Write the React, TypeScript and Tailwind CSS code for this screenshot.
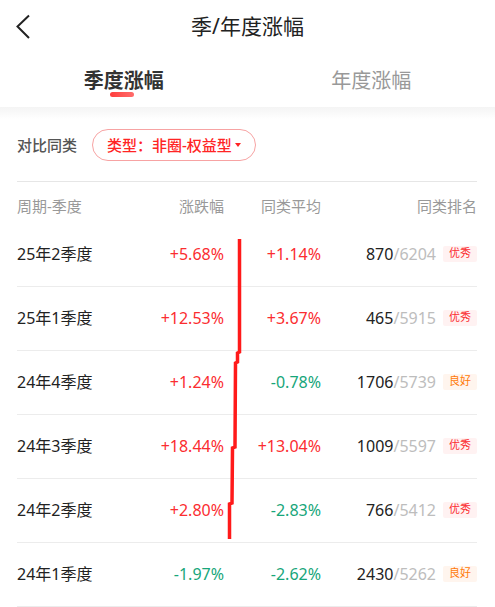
import React from "react";

type Row = {
  period: string;
  change: string;
  avg: string;
  rank: string;
  total: string;
  level: "优秀" | "良好";
};

const rows: Row[] = [
  { period: "25年2季度", change: "+5.68%", avg: "+1.14%", rank: "870", total: "6204", level: "优秀" },
  { period: "25年1季度", change: "+12.53%", avg: "+3.67%", rank: "465", total: "5915", level: "优秀" },
  { period: "24年4季度", change: "+1.24%", avg: "-0.78%", rank: "1706", total: "5739", level: "良好" },
  { period: "24年3季度", change: "+18.44%", avg: "+13.04%", rank: "1009", total: "5597", level: "优秀" },
  { period: "24年2季度", change: "+2.80%", avg: "-2.83%", rank: "766", total: "5412", level: "优秀" },
  { period: "24年1季度", change: "-1.97%", avg: "-2.62%", rank: "2430", total: "5262", level: "良好" },
];

function Pct({ value }: { value: string }) {
  const up = value.startsWith("+");
  return (
    <span className={up ? "text-[#fb2d30]" : "text-[#17a67a]"}>{value}</span>
  );
}

function Badge({ level }: { level: Row["level"] }) {
  if (level === "优秀") {
    return (
      <span className="ml-[7px] inline-flex h-[16px] w-[34px] items-center justify-center rounded-[2px] bg-[#fff2f2] text-[11px] text-[#fb2d30]">
        优秀
      </span>
    );
  }
  return (
    <span className="ml-[7px] inline-flex h-[16px] w-[34px] items-center justify-center rounded-[2px] bg-[#fff5ee] text-[11px] text-[#ff7a0a]">
      良好
    </span>
  );
}

export default function App() {
  return (
    <div
      className="relative h-[607px] w-[495px] overflow-hidden bg-white"
      style={{ fontFamily: '"Noto Sans", "Noto Sans CJK SC", sans-serif' }}
    >
      {/* header */}
      <div className="grid h-[54px] grid-cols-[60px_1fr_60px] items-center">
        <div className="pl-[15px]">
          <svg width="18" height="26" viewBox="0 0 18 26">
            <path d="M14 1.5 L2.5 12.5 L14 24" fill="none" stroke="#222" strokeWidth="2" />
          </svg>
        </div>
        <div className="text-center text-[21px] text-[#222]">季/年度涨幅</div>
        <div />
      </div>

      {/* tabs */}
      <div className="flex h-[53px]">
        <div className="relative flex flex-1 items-center justify-center">
          <span className="text-[20px] font-bold text-[#333]">季度涨幅</span>
          <span className="absolute left-[110px] top-[38px] h-[5px] w-[24px] rounded-full bg-gradient-to-r from-[#ff3b3b] to-[#ff6b6b]" />
        </div>
        <div className="flex flex-1 items-center justify-center">
          <span className="text-[20px] text-[#999]">年度涨幅</span>
        </div>
      </div>
      <div className="h-[12px] bg-gradient-to-b from-[#f4f4f4] to-white" />

      {/* filter */}
      <div className="pl-[17px] pr-[18px]">
        <div className="flex h-[52px] items-center">
          <span className="text-[15px] font-medium text-[#555]">对比同类</span>
          <div className="ml-[15px] flex h-[32px] items-center rounded-full border border-[#f7a3a3] px-[14px]">
            <span className="text-[15px] font-medium text-[#ff2424]">类型：非圈-权益型</span>
            <svg className="ml-[3px]" width="6" height="4" viewBox="0 0 6 4">
              <path d="M0 0 L6 0 L3 4 Z" fill="#ff2424" />
            </svg>
          </div>
        </div>

        <div className="mt-[10px] border-t border-[#e6e6e6]">
          <div className="grid h-[41px] grid-cols-[113px_94px_97px_1fr] items-center pt-[8px] text-[15px] text-[#999]">
            <span>周期-季度</span>
            <span className="text-right">涨跌幅</span>
            <span className="text-right">同类平均</span>
            <span className="text-right">同类排名</span>
          </div>
          {rows.map((r) => (
            <div
              key={r.period}
              className="grid h-[64px] grid-cols-[113px_94px_97px_1fr] items-center border-b border-[#ececec] pb-[2px] text-[16px]"
            >
              <span className="text-[#222]">{r.period}</span>
              <span className="text-right">
                <Pct value={r.change} />
              </span>
              <span className="text-right">
                <Pct value={r.avg} />
              </span>
              <span className="flex items-center justify-end">
                <span className="text-[#222]">{r.rank}</span>
                <span className="text-[#bdbdbd]">/{r.total}</span>
                <Badge level={r.level} />
              </span>
            </div>
          ))}
        </div>
      </div>

      {/* hand-drawn annotation */}
      <svg className="pointer-events-none absolute left-0 top-0" width="495" height="607">
        <polyline
          points="239.5,239 239.5,352 237.5,353 237.5,362 235.5,363 235,447 232.5,448 232,503 229.5,504 229.5,539"
          fill="none"
          stroke="#ff1a1a"
          strokeWidth="3.5"
        />
      </svg>
    </div>
  );
}
